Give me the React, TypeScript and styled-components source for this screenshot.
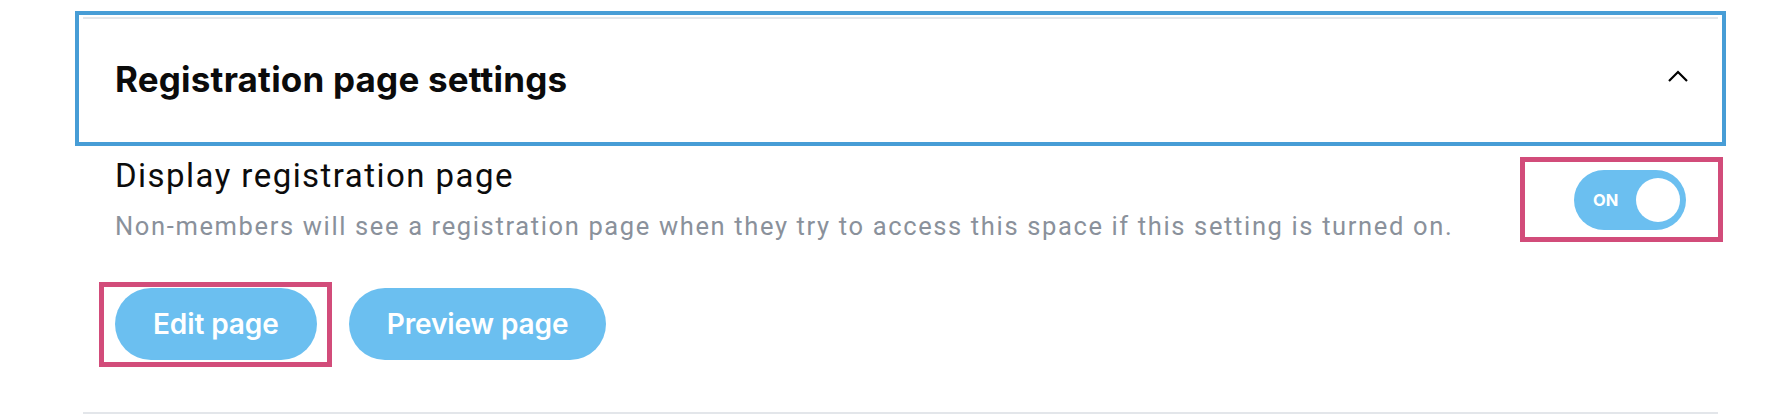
import React from "react";
import styled, { createGlobalStyle } from "styled-components";

const GlobalStyle = createGlobalStyle`
  html, body { margin: 0; padding: 0; background: #ffffff; }
  body { font-family: Inter, "Liberation Sans", sans-serif; }
`;

const Page = styled.div`
  width: 1776px;
  height: 414px;
  padding: 17px 58px 0 83px;
  box-sizing: border-box;
  overflow: hidden;
`;

const Section = styled.section`
  border-top: 2px solid #e3e6ea;
  border-bottom: 2px solid #e3e6ea;
  padding-bottom: 52px;
`;

const Header = styled.div`
  height: 119px;
  display: flex;
  align-items: center;
  justify-content: space-between;
  padding: 0 30px 0 32px;
  outline: 4px solid #479dd6;
  outline-offset: 4px;
`;

const Title = styled.h2`
  margin: 0;
  font-family: Inter, "Liberation Sans", sans-serif;
  font-weight: 700;
  font-size: 35px;
  color: #0b0b0b;
  letter-spacing: 0.2px;
`;

const Chevron = styled.svg`
  width: 20px;
  height: 12px;
  margin-top: -5px;
`;

const SettingRow = styled.div`
  margin-top: 18px;
  display: flex;
  align-items: center;
  justify-content: space-between;
  padding-left: 32px;
`;

const TextCol = styled.div`
  display: flex;
  flex-direction: column;
`;

const Label = styled.div`
  font-family: Roboto, "Liberation Sans", sans-serif;
  font-size: 33px;
  line-height: 40px;
  letter-spacing: 1.45px;
  color: #0c0c0c;
`;

const Description = styled.div`
  margin-top: 13px;
  font-family: Roboto, "Liberation Sans", sans-serif;
  font-size: 25.5px;
  line-height: 34px;
  letter-spacing: 1.64px;
  color: #8a919b;
`;

const Highlight = styled.div`
  outline: 5px solid #d24c7a;
`;

const ToggleBox = styled(Highlight)`
  display: flex;
  justify-content: flex-end;
  padding: 8px 32px 7px 49px;
`;

const Toggle = styled.button<{ $on: boolean }>`
  width: 112px;
  height: 60px;
  border-radius: 30px;
  border: none;
  background: ${(p) => (p.$on ? "#6bbff0" : "#cfd5dc")};
  display: flex;
  align-items: center;
  justify-content: space-between;
  padding: 0 6px 0 19px;
  box-sizing: border-box;
  cursor: pointer;
`;

const ToggleText = styled.span`
  font-family: Inter, "Liberation Sans", sans-serif;
  font-weight: 700;
  font-size: 16.5px;
  color: #ffffff;
`;

const Knob = styled.span`
  width: 44px;
  height: 44px;
  border-radius: 50%;
  background: #ffffff;
`;

const ButtonRow = styled.div`
  margin-top: 45px;
  padding-left: 32px;
  display: flex;
  gap: 32px;
`;

const ButtonFrame = styled(Highlight)`
  padding: 1px 10px 2px 11px;
  margin: -1px -10px -2px -11px;
  display: flex;
`;

const PillButton = styled.button`
  height: 72px;
  padding: 0 38px;
  border: none;
  border-radius: 36px;
  background: #6bbff0;
  color: #ffffff;
  font-family: Inter, "Liberation Sans", sans-serif;
  font-weight: 600;
  font-size: 28px;
  letter-spacing: -0.1px;
  cursor: pointer;
`;

export default function App() {
  return (
    <>
      <GlobalStyle />
      <Page>
        <Section>
          <Header>
            <Title>Registration page settings</Title>
            <Chevron viewBox="0 0 20 12" fill="none">
              <polyline points="1,11 10,2 19,11" stroke="#000" strokeWidth="2.2" />
            </Chevron>
          </Header>
          <SettingRow>
            <TextCol>
              <Label>Display registration page</Label>
              <Description>
                Non-members will see a registration page when they try to access this space if this setting is turned on.
              </Description>
            </TextCol>
            <ToggleBox>
              <Toggle $on={true}>
                <ToggleText>ON</ToggleText>
                <Knob />
              </Toggle>
            </ToggleBox>
          </SettingRow>
          <ButtonRow>
            <ButtonFrame>
              <PillButton>Edit page</PillButton>
            </ButtonFrame>
            <PillButton>Preview page</PillButton>
          </ButtonRow>
        </Section>
      </Page>
    </>
  );
}
